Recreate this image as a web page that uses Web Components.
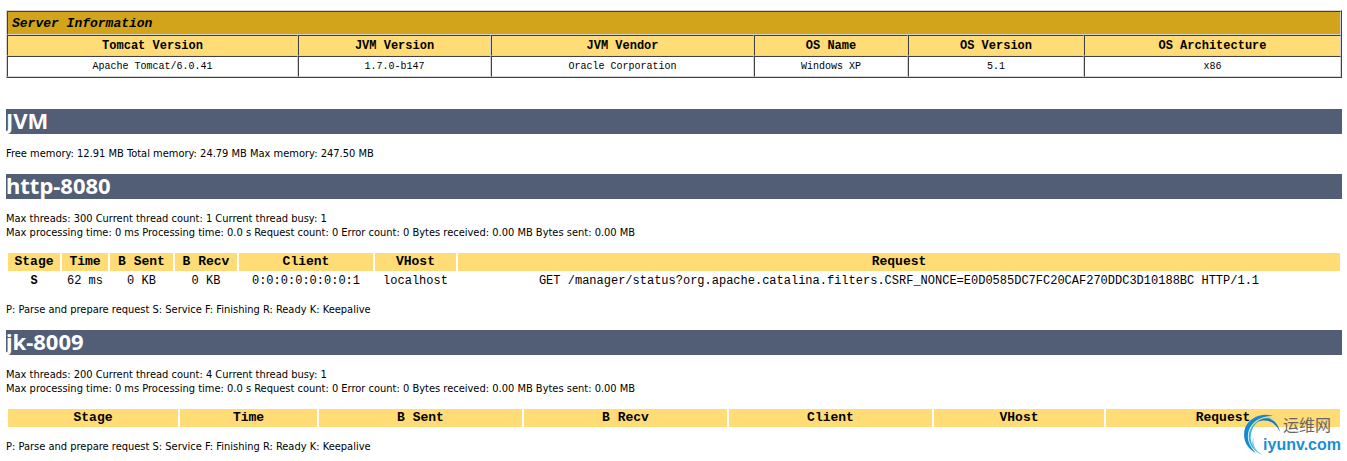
<!DOCTYPE html>
<html lang="en">
<head>
<meta charset="utf-8">
<title>/manager</title>
<style>
    body {
        margin: 0;
        padding: 10px 5px 8px 6px;
        background: #fff;
        color: #000;
        font: 11px/14px "DejaVu Sans Condensed", Tahoma, sans-serif;
        --header-bg: #ffdc75;
        --title-bg: #d2a41c;
        --band-bg: #525d76;
        --mono: "Liberation Mono", "Courier New", monospace;
    }
</style>
</head>
<body>
<server-info></server-info>

<status-section heading="JVM">
    <status-text>Free memory: 12.91 MB Total memory: 24.79 MB Max memory: 247.50 MB</status-text>
</status-section>

<status-section heading="http-8080">
    <status-text>Max threads: 300 Current thread count: 1 Current thread busy: 1<br>Max processing time: 0 ms Processing time: 0.0 s Request count: 0 Error count: 0 Bytes received: 0.00 MB Bytes sent: 0.00 MB</status-text>
    <request-table widths="52,46,63,62,134,81,882" rows='[["S","62 ms","0 KB","0 KB","0:0:0:0:0:0:0:1","localhost","GET /manager/status?org.apache.catalina.filters.CSRF_NONCE=E0D0585DC7FC20CAF270DDC3D10188BC HTTP/1.1"]]'></request-table>
    <status-text>P: Parse and prepare request S: Service F: Finishing R: Ready K: Keepalive</status-text>
</status-section>

<status-section heading="jk-8009">
    <status-text>Max threads: 200 Current thread count: 4 Current thread busy: 1<br>Max processing time: 0 ms Processing time: 0.0 s Request count: 0 Error count: 0 Bytes received: 0.00 MB Bytes sent: 0.00 MB</status-text>
    <request-table widths="170,137,203,203,203,170,234"></request-table>
    <status-text>P: Parse and prepare request S: Service F: Finishing R: Ready K: Keepalive</status-text>
</status-section>

<site-mark></site-mark>

<script>
// widths are shares of the row: a fixed table scales them to the window
const makeCols = widths => {
    const total = widths.reduce((sum, w) => sum + Number(w), 0);
    return widths.map(w => `<col style="width: ${w / total * 100}%">`).join('');
};

class ServerInfo extends HTMLElement {
    constructor() {
        super();
        this.attachShadow({ mode: 'open' });
    }

    connectedCallback() {
        this.shadowRoot.innerHTML = `
            <style>
                :host {
                    display: block;
                    margin-bottom: 31px;
                }
                table {
                    width: 100%;
                    table-layout: fixed;
                    border-collapse: separate;
                    border-spacing: 0;
                    border: 1px solid;
                    border-color: #d4d4d4 #404040 #404040 #d4d4d4;
                    font: 10px/16px var(--mono);
                    text-align: center;
                }
                th, td {
                    padding: 2px 4px 1px;
                    border: 1px solid;
                    border-color: #404040 #d4d4d4 #d4d4d4 #404040;
                }
                th {
                    background: var(--header-bg);
                    font-size: 12px;
                }
                .title {
                    padding: 4px 4px 2px;
                    background: var(--title-bg);
                    font-size: 13px;
                    font-style: italic;
                    text-align: left;
                }
            </style>
            <table>
                <colgroup>${makeCols([291, 193, 263, 154, 176, 257])}</colgroup>
                <tr><th class="title" colspan="6">Server Information</th></tr>
                <tr>
                    <th>Tomcat Version</th>
                    <th>JVM Version</th>
                    <th>JVM Vendor</th>
                    <th>OS Name</th>
                    <th>OS Version</th>
                    <th>OS Architecture</th>
                </tr>
                <tr>
                    <td>Apache Tomcat/6.0.41</td>
                    <td>1.7.0-b147</td>
                    <td>Oracle Corporation</td>
                    <td>Windows XP</td>
                    <td>5.1</td>
                    <td>x86</td>
                </tr>
            </table>
        `;
    }
}

class StatusSection extends HTMLElement {
    constructor() {
        super();
        this.attachShadow({ mode: 'open' });
    }

    connectedCallback() {
        const heading = this.getAttribute('heading') || '';
        this.shadowRoot.innerHTML = `
            <style>
                :host {
                    display: block;
                    margin-bottom: 13px;
                }
                h1 {
                    margin: 0 0 13px;
                    padding-bottom: 2px;
                    background: var(--band-bg);
                    color: #fff;
                    font: bold 22px/23px "Noto Sans", Tahoma, sans-serif;
                }
            </style>
            <h1>${heading}</h1>
            <slot></slot>
        `;
    }
}

class StatusText extends HTMLElement {
    constructor() {
        super();
        this.attachShadow({ mode: 'open' });
        this.shadowRoot.innerHTML = `
            <style>
                :host { display: block; }
                p { margin: 0; }
            </style>
            <p><slot></slot></p>
        `;
    }
}

class RequestTable extends HTMLElement {
    constructor() {
        super();
        this.attachShadow({ mode: 'open' });
    }

    connectedCallback() {
        const widths = this.getAttribute('widths').split(',');
        const rows = JSON.parse(this.getAttribute('rows') || '[]');
        const headers = ['Stage', 'Time', 'B Sent', 'B Recv', 'Client', 'VHost', 'Request'];
        const body = rows.map(row => `
            <tr>${row.map((cell, i) => `<td>${i === 0 ? `<strong>${cell}</strong>` : cell}</td>`).join('')}</tr>
        `).join('');

        this.shadowRoot.innerHTML = `
            <style>
                :host {
                    display: block;
                    margin: 11px 0;
                }
                table {
                    width: 100%;
                    table-layout: fixed;
                    border-spacing: 2px;
                    font: 12px/17px var(--mono);
                    text-align: center;
                }
                th, td {
                    padding: 0;
                    white-space: nowrap;
                }
                th {
                    background: var(--header-bg);
                    font-size: 13px;
                    line-height: 18px;
                }
            </style>
            <table>
                <colgroup>${makeCols(widths)}</colgroup>
                <tr>${headers.map(h => `<th>${h}</th>`).join('')}</tr>
                ${body}
            </table>
        `;
    }
}

class SiteMark extends HTMLElement {
    constructor() {
        super();
        this.attachShadow({ mode: 'open' });
        this.shadowRoot.innerHTML = `
            <style>
                :host {
                    position: absolute;
                    right: 6px;
                    top: 413px;
                    display: flex;
                }
                svg {
                    width: 40px;
                    height: 43px;
                    margin-right: -21px;
                }
                .words { padding-top: 4px; }
                .cn {
                    display: block;
                    padding-left: 20px;
                    color: #666;
                    font: 16px/18px "Liberation Sans", "Noto Sans CJK SC", sans-serif;
                }
                .en {
                    display: block;
                    color: #1b8fd0;
                    font: bold 16px/20px "Liberation Sans", sans-serif;
                }
            </style>
            <svg viewBox="0 0 40 43" aria-hidden="true">
                <path d="M29 3C18 -1 5 5 1 15C-2 25 2 35 12 40C5 33 2 25 5 17C8 8 18 3 29 3Z" fill="#1389cf"/>
                <path d="M31 6C21 3 11 8 8 17C4 27 9 37 19 42C9 39 3 29 5 20C8 9 20 2 31 6Z" fill="#35b3df"/>
                <path d="M13 9C23 1 34 7 36 19C31 9 23 5 13 9Z" fill="#1c79bd"/>
                <path d="M10 24C8 31 11 37 17 41C9 38 6 31 10 24Z" fill="#6cc9e8"/>
            </svg>
            <div class="words"><span class="cn">运维网</span><span class="en">iyunv.com</span></div>
        `;
    }
}

customElements.define('server-info', ServerInfo);
customElements.define('status-section', StatusSection);
customElements.define('status-text', StatusText);
customElements.define('request-table', RequestTable);
customElements.define('site-mark', SiteMark);
</script>
</body>
</html>
